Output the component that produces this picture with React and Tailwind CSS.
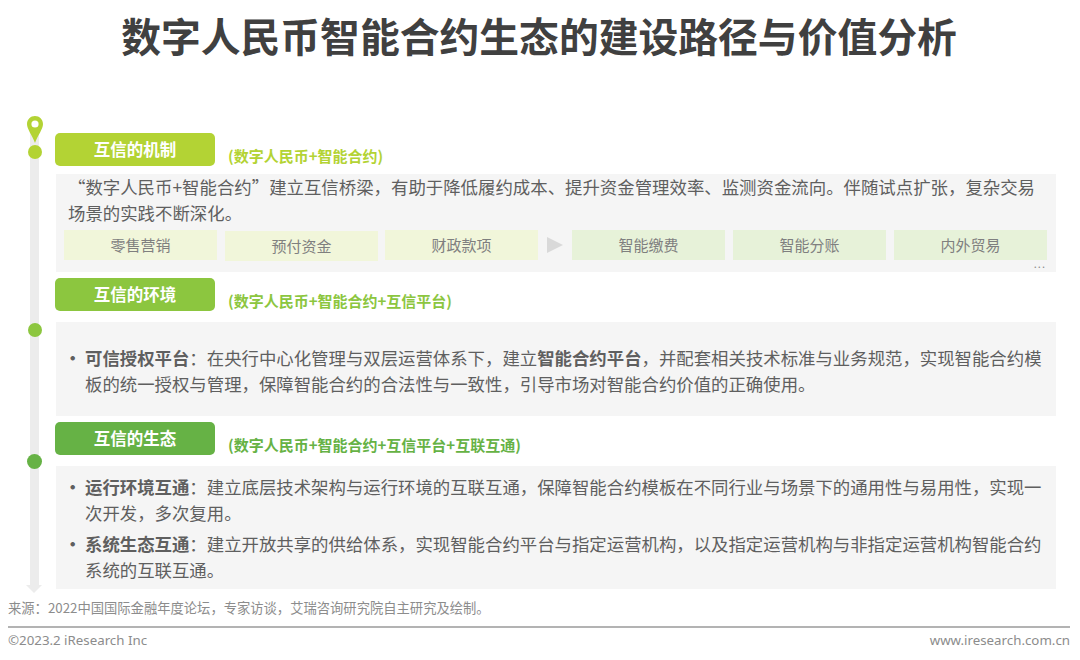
import React from 'react';

const cjk = "font-['Noto_Sans_CJK_SC','Liberation_Sans',sans-serif]";

function Pill({ color, label, sub, subColor }) {
  return (
    <div className="flex items-start">
      <div className={`w-[160px] h-[33px] rounded-[5px] flex items-center justify-center text-white font-bold text-[16.5px] leading-none ${color}`}>
        {label}
      </div>
      <div className={`ml-[13px] mt-[12.5px] text-[15px] leading-[20px] font-bold ${subColor}`}>{sub}</div>
    </div>
  );
}

function Tag({ label, color, mt }) {
  return (
    <div className={`w-[153px] h-[30px] flex items-center justify-center text-[15px] leading-none pb-[2px] text-[#7f7f7f] ${color} ${mt}`}>
      {label}
    </div>
  );
}

function Bullet({ children }) {
  return (
    <div className="flex">
      <span className="w-[29px] pl-[8px] font-bold">•</span>
      <p className="w-[963px]">{children}</p>
    </div>
  );
}

function Rail() {
  return (
    <div className="relative w-[17px] h-[477px] mt-[40px] shrink-0">
      <div className="absolute left-[3px] top-[10px] w-[9px] h-[459px] bg-[#ececec]" />
      <div className="absolute left-[-1px] top-[469px] w-0 h-0 border-l-[8.5px] border-r-[8.5px] border-t-[8px] border-l-transparent border-r-transparent border-t-[#ececec]" />
      <svg className="absolute left-0 top-0" width="16" height="27" viewBox="0 0 16 27">
        <path d="M8 0C3.600 0 0 3.500 0 8c0 5 5 11 8 19 3-8 8-14 8-19 0-4.500-3.600-8-8-8z" fill="#b3d334" />
        <circle cx="8" cy="8" r="3.600" fill="#fff" />
      </svg>
      <div className="absolute left-[0.500px] top-[29px] w-[14px] h-[14px] rounded-full bg-[#b3d334]" />
      <div className="absolute left-[0.500px] top-[207px] w-[14px] h-[14px] rounded-full bg-[#8cc63f]" />
      <div className="absolute left-[0px] top-[338px] w-[15px] h-[15px] rounded-full bg-[#66b245]" />
    </div>
  );
}

export default function App() {
  return (
    <div lang="zh-CN" className={`w-[1080px] h-[660px] bg-white flex flex-col overflow-hidden text-[#5f5f5f] ${cjk}`}>
      <h1 className="h-[76px] flex items-center justify-center pb-[6px] pr-[2px] text-[39.8px] font-bold text-[#404040]">
        数字人民币智能合约生态的建设路径与价值分析
      </h1>

      <div className="flex h-[517px] pl-[27px]">
        <Rail />
        <div className="ml-[11px] w-[1001px] pt-[57px]">
          <Pill color="bg-[#b3d334]" label="互信的机制" sub="(数字人民币+智能合约)" subColor="text-[#b3d334]" />
          <div className="mt-[8px] ml-px w-[1000px] h-[98px] bg-[#f5f5f5] relative">
            <p className="pl-[12px] w-[985px] text-[17.42px] leading-[26px]">
              “数字人民币+智能合约”建立互信桥梁，有助于降低履约成本、提升资金管理效率、监测资金流向。伴随试点扩张，复杂交易场景的实践不断深化。
            </p>
            <div className="flex items-start mt-[4px] pl-[8px]">
              <Tag label="零售营销" color="bg-[#f1f6da]" />
              <Tag label="预付资金" color="bg-[#f1f6da]" mt="ml-[8px] mt-[1px]" />
              <Tag label="财政款项" color="bg-[#f1f6da]" mt="ml-[7px]" />
              <div className="ml-[9px] mt-[7px] w-0 h-0 border-t-[8px] border-b-[8px] border-l-[16px] border-t-transparent border-b-transparent border-l-[#d9d9d9]" />
              <Tag label="智能缴费" color="bg-[#e7f2d9]" mt="ml-[9px]" />
              <Tag label="智能分账" color="bg-[#e7f2d9]" mt="ml-[8px]" />
              <Tag label="内外贸易" color="bg-[#e7f2d9]" mt="ml-[8px]" />
            </div>
            <span className="absolute right-[10px] bottom-[3px] text-[11px] leading-[12px] tracking-[1px] text-[#8c8c8c]">...</span>
          </div>

          <div className="mt-[6px]">
            <Pill color="bg-[#8cc63f]" label="互信的环境" sub="(数字人民币+智能合约+互信平台)" subColor="text-[#8cc63f]" />
          </div>
          <div className="mt-[11px] ml-px w-[1000px] h-[94px] bg-[#f5f5f5] flex items-center pt-[3px] text-[17.4px] leading-[26px]">
            <Bullet>
              <b>可信授权平台</b>：在央行中心化管理与双层运营体系下，建立<b>智能合约平台</b>，并配套相关技术标准与业务规范，实现智能合约模板的统一授权与管理，保障智能合约的合法性与一致性，引导市场对智能合约价值的正确使用。
            </Bullet>
          </div>

          <div className="mt-[6px]">
            <Pill color="bg-[#66b245]" label="互信的生态" sub="(数字人民币+智能合约+互信平台+互联互通)" subColor="text-[#66b245]" />
          </div>
          <div className="mt-[11px] ml-px w-[1000px] h-[123px] bg-[#f5f5f5] flex flex-col justify-center gap-[5px] pt-[2px] text-[17.4px] leading-[26px]">
            <Bullet>
              <b>运行环境互通</b>：建立底层技术架构与运行环境的互联互通，保障智能合约模板在不同行业与场景下的通用性与易用性，实现一次开发，多次复用。
            </Bullet>
            <Bullet>
              <b>系统生态互通</b>：建立开放共享的供给体系，实现智能合约平台与指定运营机构，以及指定运营机构与非指定运营机构智能合约系统的互联互通。
            </Bullet>
          </div>
        </div>
      </div>

      <div className="pl-[8px] mt-[6px] text-[13.3px] leading-[18px] text-[#8c8c8c]">
        来源：2022中国国际金融年度论坛，专家访谈，艾瑞咨询研究院自主研究及绘制。
      </div>
      <div className="mx-[8px] mt-[9px] w-[1062px] h-[2px] bg-[#b3b3b3]" />
      <div className="flex justify-between pl-[8px] pr-[10px] mt-[3px] text-[13.3px] leading-[18px] text-[#8c8c8c] font-['Noto_Sans','Noto_Sans_CJK_SC',sans-serif]">
        <span>©2023.2 iResearch Inc</span>
        <span>www.iresearch.com.cn</span>
      </div>
    </div>
  );
}
